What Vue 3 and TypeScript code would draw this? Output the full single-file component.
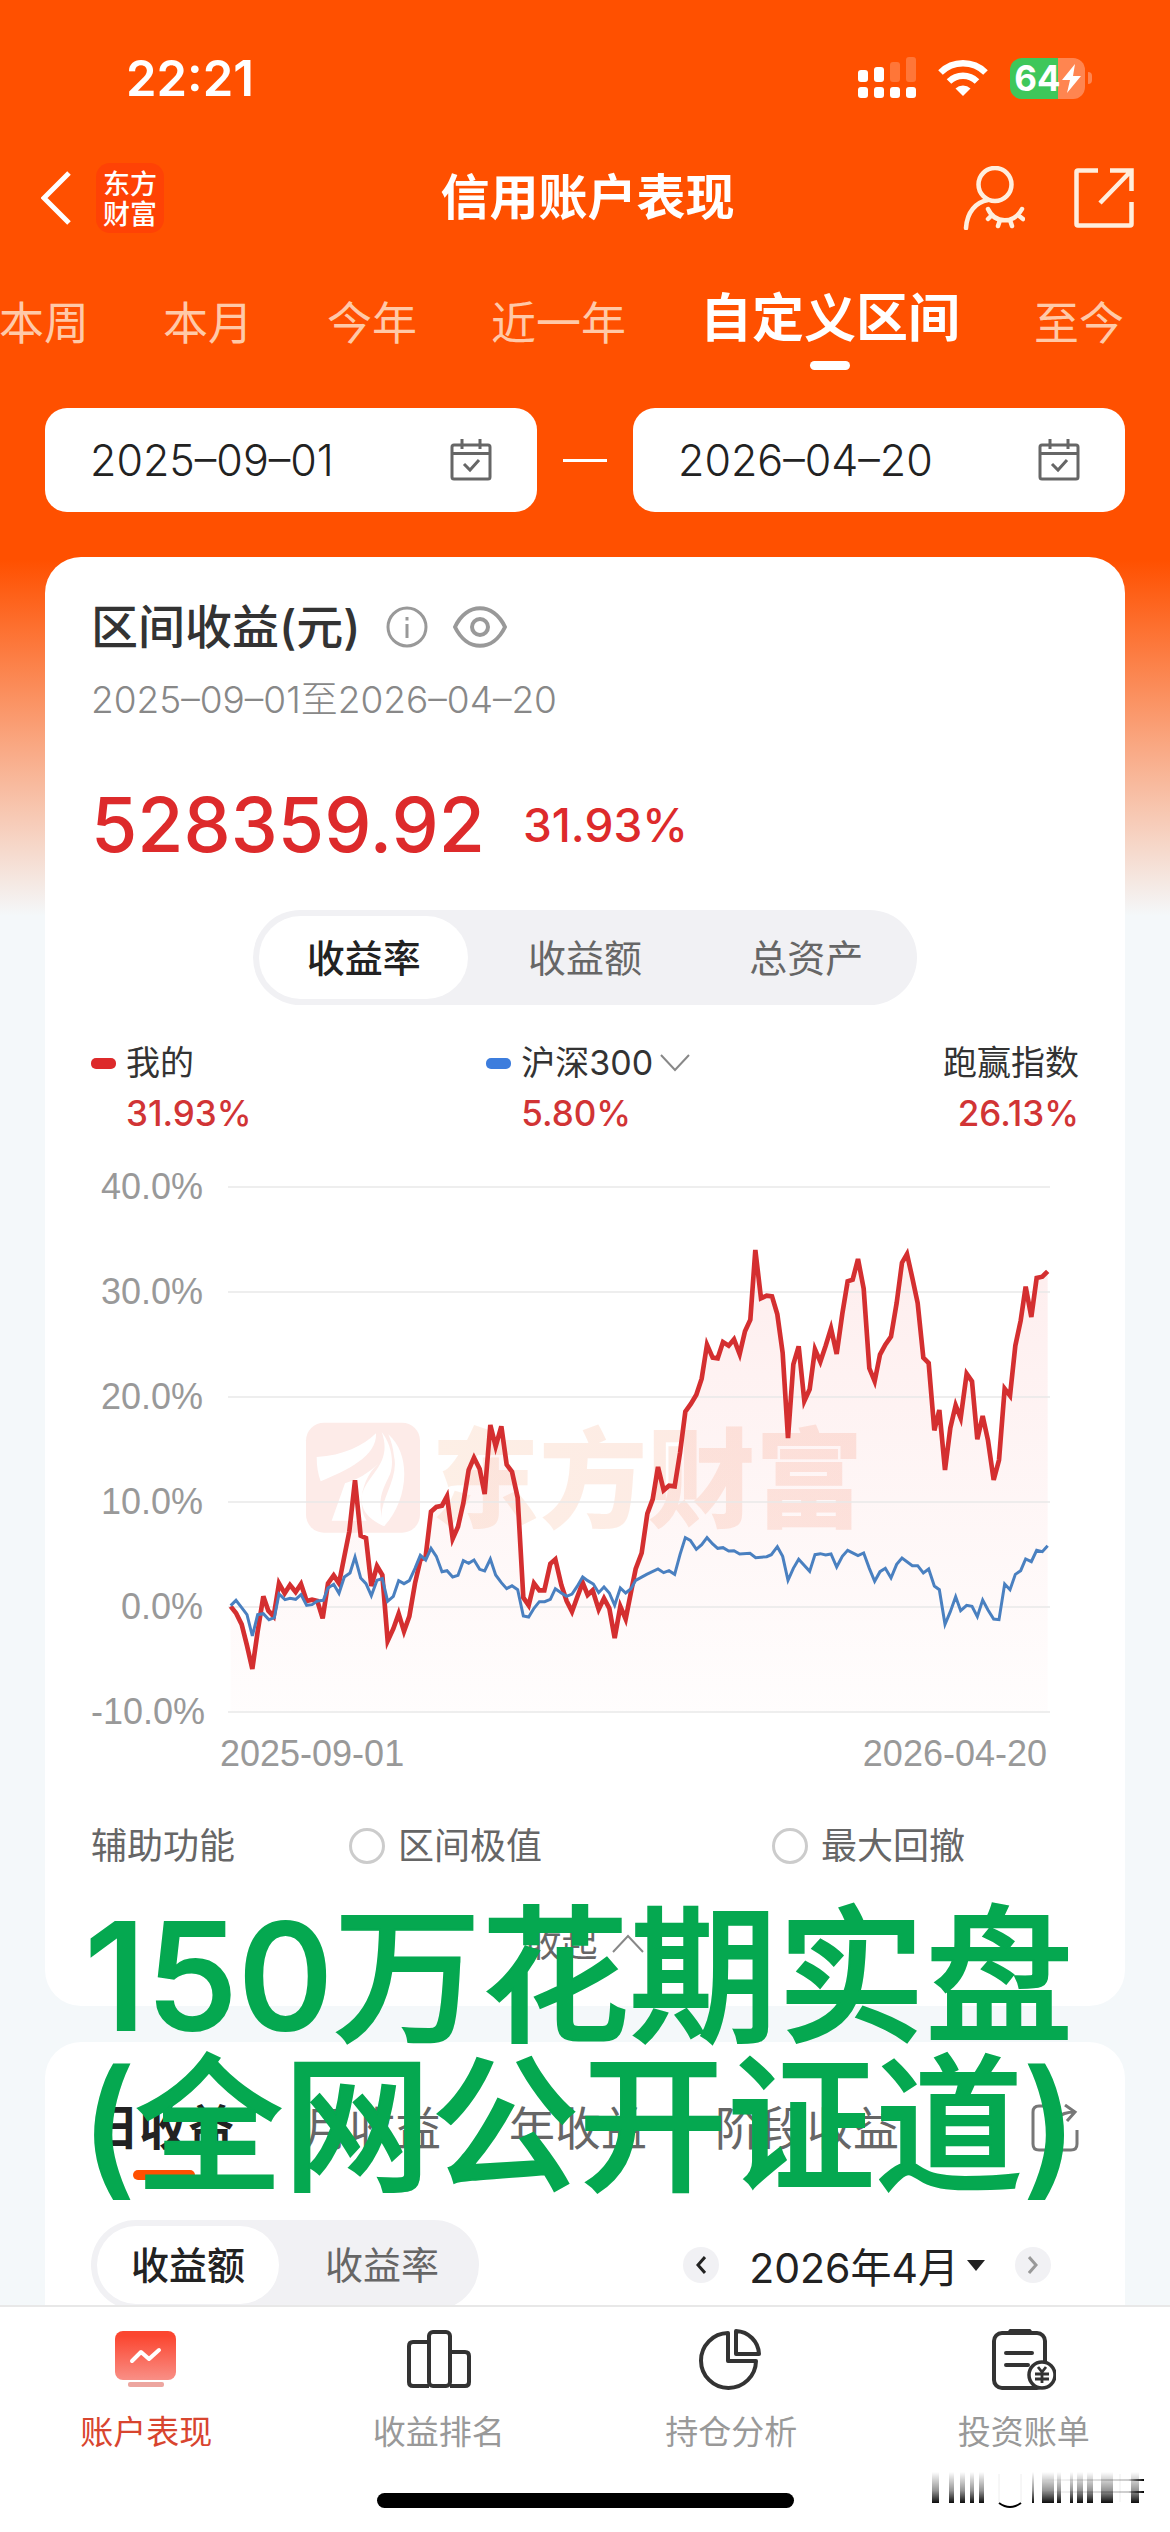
<script setup lang="ts">
import { ref } from 'vue'

const periods: string[] = ['本周', '本月', '今年', '近一年', '自定义区间', '至今']
const period = ref('自定义区间')
const startDate = ref('2025–09–01')
const endDate = ref('2026–04–20')

const metrics: string[] = ['收益率', '收益额', '总资产']
const metric = ref('收益率')

const axis: string[] = ['40.0%', '30.0%', '20.0%', '10.0%', '0.0%', '-10.0%']
const gridRows: number[] = [81, 396, 711, 1026, 1341, 1656]

// Samples use 294 units per 10%; the plot draws 315 units per 10%.
function toPlot(samples: string): string {
  return samples
    .split(' ')
    .map((pair) => {
      const [x, y] = pair.split(',').map(Number)
      return `${x},${Math.round((y * 315) / 294)}`
    })
    .join(' ')
}

const mine = toPlot(
  '92,1250 108,1268 125,1300 141,1360 157,1425 173,1320 190,1222 205,1262 221,1278 237,1185 254,1213 270,1190 287,1210 303,1187 320,1235 336,1231 352,1235 368,1283 384,1185 401,1163 417,1185 433,1110 448,1040 465,897 482,1052 498,1058 514,1193 531,1137 547,1162 563,1347 580,1312 596,1270 612,1320 628,1278 645,1185 661,1120 677,1110 693,985 709,972 726,968 741,942 758,1060 774,1027 790,960 806,868 822,833 839,865 854,935 871,742 887,802 904,746 920,853 936,873 953,945 970,1225 986,1247 1002,1185 1018,1205 1033,1205 1051,1130 1066,1118 1084,1190 1100,1235 1116,1265 1131,1225 1148,1183 1163,1218 1178,1205 1196,1258 1212,1227 1228,1255 1244,1338 1261,1250 1277,1285 1293,1210 1307,1145 1325,1100 1342,990 1358,950 1374,860 1391,925 1407,912 1424,914 1440,820 1456,705 1473,682 1489,657 1505,612 1521,517 1538,553 1553,555 1569,510 1586,520 1602,502 1619,543 1635,480 1651,447 1666,252 1683,387 1700,380 1716,382 1732,432 1748,540 1764,778 1780,572 1796,522 1813,675 1829,642 1845,530 1861,565 1877,520 1893,471 1910,543 1927,430 1943,340 1958,335 1974,277 1991,360 2008,583 2024,620 2040,545 2056,517 2073,495 2090,400 2106,287 2121,263 2137,330 2153,400 2170,553 2186,568 2203,757 2218,700 2235,868 2251,750 2267,687 2282,722 2300,598 2316,620 2332,782 2348,717 2364,785 2381,896 2397,840 2414,640 2430,660 2446,520 2462,450 2477,355 2494,440 2510,330 2527,327 2543,312'
)
const index300 = toPlot(
  '92,1248 108,1233 125,1253 141,1273 157,1333 173,1273 190,1270 207,1287 223,1281 237,1215 255,1231 270,1227 287,1230 303,1217 320,1247 336,1245 352,1235 370,1233 384,1198 401,1188 417,1213 433,1168 450,1156 465,1112 482,1170 498,1186 514,1220 531,1177 547,1172 563,1236 580,1222 596,1178 612,1186 628,1178 645,1143 661,1107 677,1120 693,1087 709,1110 726,1153 741,1150 758,1168 774,1163 790,1122 806,1129 822,1120 839,1146 854,1151 871,1117 887,1162 904,1183 920,1200 936,1192 953,1203 970,1277 986,1280 1002,1255 1018,1237 1034,1237 1051,1230 1066,1200 1084,1212 1100,1222 1116,1215 1131,1195 1148,1168 1163,1178 1180,1187 1196,1211 1212,1196 1228,1212 1244,1247 1261,1198 1277,1212 1293,1200 1307,1177 1340,1160 1374,1145 1391,1155 1407,1150 1424,1160 1440,1105 1456,1057 1471,1065 1489,1090 1505,1077 1521,1057 1538,1075 1553,1087 1569,1085 1586,1095 1602,1094 1619,1103 1650,1101 1667,1113 1700,1111 1714,1105 1732,1083 1748,1110 1764,1177 1780,1143 1796,1118 1829,1152 1845,1105 1861,1102 1877,1106 1893,1103 1910,1140 1927,1110 1943,1093 1974,1108 1991,1100 2008,1143 2024,1180 2040,1153 2056,1143 2073,1170 2090,1132 2106,1114 2137,1136 2153,1136 2170,1156 2186,1145 2203,1193 2218,1203 2235,1300 2251,1265 2267,1223 2282,1262 2300,1247 2316,1250 2332,1279 2348,1232 2364,1260 2381,1285 2397,1287 2414,1187 2430,1203 2446,1160 2462,1150 2477,1117 2494,1125 2510,1093 2527,1097 2543,1080'
)

const helpers: string[] = ['区间极值', '最大回撤']
const helper = ref('')

const incomeTabs: string[] = ['日收益', '月收益', '年收益', '阶段收益']
const incomeTab = ref('日收益')
const incomeKinds: string[] = ['收益额', '收益率']
const incomeKind = ref('收益额')
</script>

<template>
  <div class="page">
    <header class="top">
      <div class="status">
        <span class="clock">22:21</span>
        <div class="status-icons">
          <svg width="58" height="42" viewBox="0 0 58 42" fill="#fff">
            <rect x="0" y="13" width="10" height="12" rx="3" />
            <rect x="16" y="10" width="10" height="15" rx="3" />
            <rect x="32" y="5" width="10" height="20" rx="3" opacity=".22" />
            <rect x="48" y="0" width="10" height="25" rx="3" opacity=".22" />
            <rect x="0" y="30" width="10" height="11" rx="3" />
            <rect x="16" y="30" width="10" height="11" rx="3" />
            <rect x="32" y="30" width="10" height="11" rx="3" />
            <rect x="48" y="30" width="10" height="11" rx="3" />
          </svg>
          <svg width="50" height="38" viewBox="0 0 50 38" fill="none" stroke="#fff" stroke-width="6.500">
            <path d="M2.500 13.500A32 32 0 0 1 47.500 13.500" />
            <path d="M11 22.500A20 20 0 0 1 39 22.500" />
            <path d="M25 37L17.500 29.500A11 11 0 0 1 32.500 29.500Z" fill="#fff" stroke="none" />
          </svg>
          <div class="battery">
            <span class="cell">
              64<svg width="19" height="29" viewBox="0 0 19 29"><path d="M13 0L0 16H8L5 29L19 12H11Z" fill="#fff" /></svg>
            </span>
            <span class="cap"></span>
          </div>
        </div>
      </div>

      <div class="bar">
        <div class="side">
          <button class="plain" aria-label="返回">
            <svg width="30" height="54" viewBox="0 0 30 54" fill="none" stroke="#fff" stroke-width="5"><path d="M28 2L3 27L28 52" /></svg>
          </button>
          <span class="brand"><span>东方</span><span>财富</span></span>
        </div>
        <h1>信用账户表现</h1>
        <div class="side end">
          <button class="plain" aria-label="隐藏账户">
            <svg width="62" height="64" viewBox="0 0 62 64" fill="none" stroke="#ffeedd" stroke-width="4.500" stroke-linecap="round">
              <circle cx="32" cy="18.500" r="16.500" />
              <path d="M3 62C4 46 13 36 25 34M25 43C32 58 51 58 59 43M29 49L25 53M37 54L35 60M47 54L49 60M55 49L60 53" />
            </svg>
          </button>
          <button class="plain" aria-label="分享">
            <svg width="60" height="60" viewBox="0 0 60 60" fill="none" stroke="#ffeedd" stroke-width="4.500">
              <path d="M24 2.500H4Q2.500 2.500 2.500 4V56Q2.500 57.500 4 57.500H56Q57.500 57.500 57.500 56V34M36 2.500H57.500V23M57 3L26 35" />
            </svg>
          </button>
        </div>
      </div>

      <nav class="periods">
        <button v-for="p in periods" :key="p" :class="['period', { on: p === period }]" @click="period = p">{{ p }}</button>
      </nav>

      <div class="range">
        <label class="field">
          <input v-model="startDate" type="text" aria-label="开始日期" />
          <svg class="cal" viewBox="0 0 42 42"><path d="M4 6H38Q40 6 40 8V38Q40 40 38 40H4Q2 40 2 38V8Q2 6 4 6ZM2 14.500H40M12 0V10M30 0V10M14 25L20 31L29 21" /></svg>
        </label>
        <span class="dash"></span>
        <label class="field">
          <input v-model="endDate" type="text" aria-label="结束日期" />
          <svg class="cal" viewBox="0 0 42 42"><path d="M4 6H38Q40 6 40 8V38Q40 40 38 40H4Q2 40 2 38V8Q2 6 4 6ZM2 14.500H40M12 0V10M30 0V10M14 25L20 31L29 21" /></svg>
        </label>
      </div>
    </header>

    <main>
      <section class="card summary">
        <div class="heading">
          <h2>区间收益(元)</h2>
          <button class="plain" aria-label="说明">
            <svg width="42" height="42" viewBox="0 0 42 42" fill="none" stroke="#999" stroke-width="3"><circle cx="21" cy="21" r="19" /><path d="M21 18V32M21 11V14.500" /></svg>
          </button>
          <button class="plain" aria-label="显示金额">
            <svg width="54" height="42" viewBox="0 0 54 42" fill="none" stroke="#999" stroke-width="4"><path d="M2 21C14 -4 40 -4 52 21C40 46 14 46 2 21Z" stroke-linejoin="round" /><circle cx="27" cy="21" r="8" /></svg>
          </button>
        </div>
        <p class="span">2025–09–01至2026–04–20</p>
        <p class="total"><strong>528359.92</strong><span>31.93%</span></p>

        <div class="segment wide">
          <button v-for="m in metrics" :key="m" :class="{ on: m === metric }" @click="metric = m">{{ m }}</button>
        </div>

        <div class="legend">
          <div class="entry first">
            <i class="mark red"></i><span>我的</span>
            <b>31.93%</b>
          </div>
          <div class="entry">
            <i class="mark blue"></i>
            <button class="plain pick">沪深300<svg width="30" height="18" viewBox="0 0 30 18" fill="none" stroke="#888" stroke-width="2"><path d="M1 1L15 16L29 1" /></svg></button>
            <b>5.80%</b>
          </div>
          <div class="entry last">
            <span>跑赢指数</span>
            <b>26.13%</b>
          </div>
        </div>

        <div class="chart">
          <div class="axis"><span v-for="a in axis" :key="a">{{ a }}</span></div>
          <svg class="plot" viewBox="84 81 2466 1575" fill="none">
            <defs>
              <linearGradient id="area" x1="0" y1="270" x2="0" y2="1656" gradientUnits="userSpaceOnUse">
                <stop offset="0" stop-color="#f02a2a" stop-opacity=".08" />
                <stop offset="1" stop-color="#f02a2a" stop-opacity=".01" />
              </linearGradient>
              <linearGradient id="water" x1="0" y1="0" x2="1" y2="0">
                <stop offset="0" stop-color="#fdefe6" />
                <stop offset="1" stop-color="#fde8e2" />
              </linearGradient>
            </defs>
            <rect x="318" y="788" width="342" height="330" rx="54" fill="#fdebe8" />
            <path d="M350 891C430 887 490 857 528 820C532 889 440 932 362 964Q350 932 350 891Z" fill="#fff" />
            <path d="M545 816C580 911 500 943 485 1007C480 1061 520 1082 552 1099C530 1018 545 996 570 943C585 900 570 846 545 816Z" fill="#fff" />
            <path d="M565 823C640 889 620 1029 552 1099C520 1039 600 964 582 889Q578 852 565 823ZM435 970L395 1082H500C470 1039 485 954 535 911Q490 954 435 970Z" fill="#fff" />
            <text x="694" y="1076" class="water">东方财富</text>
            <path :d="`M92,1656 L${mine} L2543,1656 Z`" fill="url(#area)" />
            <path v-for="y in gridRows" :key="y" :d="`M84 ${y}H2550`" stroke="#e8e8e8" stroke-width="4" />
            <polyline :points="mine" stroke="#d42f30" stroke-width="14" />
            <polyline :points="index300" stroke="#4a80c0" stroke-width="9" />
          </svg>
          <div class="dates"><span>2025-09-01</span><span>2026-04-20</span></div>
        </div>

        <div class="helpers">
          <span>辅助功能</span>
          <label v-for="h in helpers" :key="h"><input v-model="helper" type="radio" name="helper" :value="h" />{{ h }}</label>
        </div>
        <button class="plain fold">收起<svg width="34" height="20" viewBox="0 0 34 20" fill="none" stroke="#888" stroke-width="2"><path d="M2 18L17 2L32 18" /></svg></button>
      </section>

      <section class="card income">
        <div class="income-tabs">
          <button v-for="t in incomeTabs" :key="t" :class="['plain', { on: t === incomeTab }]" @click="incomeTab = t">{{ t }}</button>
          <button class="plain share" aria-label="分享收益">
            <svg width="48" height="48" viewBox="0 0 48 48" fill="none" stroke="#777" stroke-width="3"><path d="M26 2H8Q2 2 2 8V40Q2 46 8 46H40Q46 46 46 40V26M20 32C20 16 28 8 44 8M34 1L44 8L36 17" /></svg>
          </button>
        </div>
        <div class="controls">
          <div class="segment">
            <button v-for="k in incomeKinds" :key="k" :class="{ on: k === incomeKind }" @click="incomeKind = k">{{ k }}</button>
          </div>
          <div class="month">
            <button class="round" aria-label="上个月"><svg width="10" height="18" viewBox="0 0 10 18" fill="none" stroke="#222" stroke-width="3"><path d="M9 1L2 9L9 17" /></svg></button>
            <button class="plain current">2026年4月<svg width="18" height="11" viewBox="0 0 18 11"><path d="M0 0H18L9 11Z" fill="#222" /></svg></button>
            <button class="round" aria-label="下个月"><svg width="10" height="18" viewBox="0 0 10 18" fill="none" stroke="#999" stroke-width="3"><path d="M1 1L8 9L1 17" /></svg></button>
          </div>
        </div>
      </section>
    </main>

    <p class="caption">150万花期实盘<br />(全网公开证道)</p>

    <footer class="dock">
      <nav class="tabs">
        <a href="#account" class="on">
          <svg width="64" height="64" viewBox="0 0 64 64">
            <defs><linearGradient id="tile" x1="0" y1="0" x2="0" y2="1"><stop offset=".1" stop-color="#fb4630" /><stop offset="1" stop-color="#f98f86" /></linearGradient></defs>
            <rect x="1" y="3" width="61" height="49" rx="8" fill="url(#tile)" /><rect x="14" y="54" width="36" height="5" rx="2" fill="#eda6a0" />
            <path d="M18 33L27 24L35 31L45 22" fill="none" stroke="#fff" stroke-width="4" stroke-linecap="round" stroke-linejoin="round" />
          </svg>
          账户表现
        </a>
        <a href="#rank">
          <svg width="64" height="64" viewBox="0 0 64 64" fill="none" stroke="#333" stroke-width="4">
            <rect x="22" y="4" width="21" height="54" rx="4" /><path d="M22 14H6Q2 14 2 18V54Q2 58 6 58H22M43 24H58Q62 24 62 28V54Q62 58 58 58H43" />
          </svg>
          收益排名
        </a>
        <a href="#holdings">
          <svg width="64" height="64" viewBox="0 0 64 64" fill="none" stroke="#333" stroke-width="4" stroke-linejoin="round">
            <path d="M29 5A27.500 27.500 0 1 0 57 33H29Z" /><path d="M37 3V26H60A24 24 0 0 0 37 3Z" />
          </svg>
          持仓分析
        </a>
        <a href="#bill">
          <svg width="64" height="64" viewBox="0 0 64 64" fill="none" stroke="#333" stroke-width="4">
            <rect x="2" y="5" width="51" height="55" rx="8" /><path d="M18 2H38L41 6H15Z" fill="#333" stroke-linejoin="round" stroke-width="2" />
            <path d="M14 25H40M14 37H36" stroke-linecap="round" /><circle cx="50" cy="47" r="13" fill="#fff" stroke-width="3.500" />
            <path d="M46 39L50 44L54 39M43 46H57M43 51H57M50 44V55" stroke-width="2.800" />
          </svg>
          投资账单
        </a>
      </nav>
      <div class="home">
        <span class="pill"></span>
        <svg class="trace" width="214" height="40" viewBox="0 0 214 40">
          <defs><linearGradient id="fade" x1="0" y1="0" x2="0" y2="31" gradientUnits="userSpaceOnUse"><stop offset="0" stop-color="#000" stop-opacity="0" /><stop offset=".6" stop-color="#000" stop-opacity=".42" /><stop offset="1" stop-color="#000" stop-opacity=".95" /></linearGradient>
            <linearGradient id="rule" x1="0" y1="0" x2="1" y2="0"><stop offset="0" stop-color="#000" stop-opacity="0" /><stop offset=".85" stop-color="#000" stop-opacity=".2" /><stop offset="1" stop-color="#000" /></linearGradient></defs>
          <path d="M2 0h7v31h-7zM19 0h5v31h-5zM30 0h5v31h-5zM40 0h4v31h-4zM49 0h5v31h-5zM102 0h2v31h-2zM112 0h12v31h-12zM127 0h4v31h-4zM140 0h3v31h-3zM147 0h6v31h-6zM157 0h6v31h-6zM171 0h12v31h-12zM201 0h8v31h-8z" fill="url(#fade)" />
          <path d="M69 31Q80 39 91 31" fill="none" stroke="#000" stroke-width="2" />
          <path d="M69 2V30M91 2V30M190 2V30" stroke="#eee" stroke-width="1" />
          <rect x="110" y="7" width="104" height="2" fill="url(#rule)" /><rect x="110" y="19" width="104" height="2" fill="url(#rule)" />
        </svg>
      </div>
    </footer>
  </div>
</template>

<style>
body {
  background: #f4f8fa;
}
</style>

<style scoped>
.page {
  position: relative;
  box-sizing: border-box;
  display: flex;
  flex-direction: column;
  min-height: 100vh;
  overflow: hidden;
  background: linear-gradient(#ff5000 560px, #f4f8fa 916px);
  font-family: Inter, 'Noto Sans CJK SC', sans-serif;
  color: #333;
}
h1, h2, p { margin: 0; font-weight: 500; }
button {
  border: 0;
  padding: 0;
  background: none;
  font: inherit;
  color: inherit;
  white-space: nowrap;
}
svg { display: block; flex: none; }
.plain { display: flex; align-items: center; }

.status {
  display: flex;
  align-items: center;
  justify-content: space-between;
  height: 156px;
  padding: 0 78px 0 126px;
  color: #fff;
}
.clock { font-size: 49px; font-weight: 600; }
.status-icons { display: flex; align-items: center; gap: 22px; }
.battery { display: flex; align-items: center; gap: 3px; }
.cell {
  display: flex;
  align-items: center;
  justify-content: center;
  gap: 1px;
  width: 75px;
  height: 41px;
  border-radius: 12px;
  background: linear-gradient(90deg, #3ec75a 64%, #ff8550 64%);
  font-size: 35px;
  font-weight: 700;
}
.cap { width: 4px; height: 12px; border-radius: 0 4px 4px 0; background: #ff8550; }

.bar {
  display: flex;
  align-items: center;
  height: 84px;
  padding: 0 36px 0 41px;
}
.side { flex: 1; display: flex; align-items: center; gap: 25px; }
.side.end { justify-content: flex-end; gap: 49px; }
.bar h1 { font-size: 49px; line-height: 60px; font-weight: 700; color: #fff; }
.brand {
  display: flex;
  flex-direction: column;
  align-items: center;
  justify-content: center;
  width: 68px;
  height: 70px;
  border-radius: 14px;
  background: #ff4205;
  font-size: 27px;
  line-height: 30px;
  font-weight: 500;
  font-family: 'Noto Sans CJK SC', sans-serif;
  color: #fff;
}

.periods {
  display: flex;
  align-items: flex-start;
  gap: 74px;
  height: 90px;
  margin: 40px 0 38px -1px;
}
.period { font-size: 45px; line-height: 88px; color: #ffc9a8; }
.period.on { font-size: 52px; line-height: 78px; font-weight: 700; color: #fff; }
.period.on::after {
  content: '';
  display: block;
  width: 40px;
  height: 9px;
  margin: 3px auto 0;
  border-radius: 5px;
  background: #fff;
}

.range { display: flex; align-items: center; gap: 26px; padding: 0 45px; }
.field {
  flex: 1;
  min-width: 0;
  box-sizing: border-box;
  display: flex;
  align-items: center;
  height: 104px;
  padding: 0 45px;
  border-radius: 22px;
  background: #fff;
}
.field input {
  flex: 1;
  min-width: 0;
  padding: 0;
  border: 0;
  outline: 0;
  background: none;
  font: inherit;
  font-size: 43px;
  font-weight: 300;
  color: #222;
}
.cal { width: 42px; height: 42px; fill: none; stroke: #666; stroke-width: 3; }
.dash { width: 44px; height: 3px; background: #fff; }

main { flex: 1; display: flex; flex-direction: column; gap: 36px; padding: 45px 45px 0; }
.card { border-radius: 36px; background: #fff; padding: 0 46px; }
.summary { padding-top: 40px; padding-bottom: 42px; }
.heading { display: flex; align-items: center; height: 60px; gap: 25px; }
.heading h2 { font-size: 47px; line-height: 60px; }
.span { margin-top: 21px; font-size: 37px; font-weight: 300; line-height: 44px; color: #888; }
.total {
  display: flex;
  align-items: center;
  gap: 38px;
  margin-top: 63px;
  line-height: 80px;
  color: #dd2a2b;
}
.total strong { font-size: 75px; font-weight: 500; }
.total span { font-size: 46px; }

.segment {
  box-sizing: border-box;
  display: flex;
  gap: 12px;
  height: 90px;
  padding: 6px;
  border-radius: 48px;
  background: #f1f1f4;
}
.segment button {
  flex: 1;
  border-radius: 42px;
  padding: 0 34px;
  font-size: 38px;
  line-height: 76px;
  color: #666;
}
.segment button.on { background: #fff; font-weight: 500; color: #222; }
.wide { width: 664px; height: 95px; margin: 45px auto 0; }

.legend {
  display: flex;
  margin-top: 38px;
  font-size: 34px;
  line-height: 40px;
}
.entry { display: grid; grid-template-columns: 25px auto; align-items: center; justify-content: start; gap: 10px; }
.entry.first { flex: 0 0 40%; }
.entry b { grid-column: 2; font-size: 35px; font-weight: 500; color: #d13435; }
.entry.last { grid-template-columns: auto; justify-items: end; margin-left: auto; }
.entry.last b { grid-column: 1; }
.mark { height: 11px; border-radius: 5px; }
.red { background: #dd2a2b; }
.blue { background: #3d7ddd; }
.pick { gap: 7px; }

.chart {
  display: grid;
  grid-template-columns: 112px 1fr;
  column-gap: 25px;
  align-items: center;
  margin-top: 36px;
  padding-right: 29px;
  font-family: 'Liberation Sans', sans-serif;
  font-size: 36px;
  line-height: 36px;
  color: #999;
}
.axis {
  align-self: stretch;
  display: flex;
  flex-direction: column;
  justify-content: space-between;
  text-align: right;
}
.plot { width: 100%; height: auto; margin: 18px 0; overflow: visible; }
.water { font: 900 324px 'Noto Sans CJK SC', sans-serif; fill: url(#water); }
.dates {
  grid-column: 1 / -1;
  display: flex;
  justify-content: space-between;
  margin-top: 4px;
  padding: 0 3px 0 129px;
  line-height: 40px;
}

.helpers {
  display: grid;
  grid-template-columns: 258px 423px auto;
  margin-top: 52px;
  font-size: 36px;
  line-height: 40px;
  color: #666;
}
.helpers label { display: flex; align-items: center; gap: 13px; }
.helpers input {
  appearance: none;
  box-sizing: border-box;
  width: 36px;
  height: 36px;
  margin: 0;
  border: 3px solid #ccc;
  border-radius: 50%;
}
.fold { gap: 13px; margin: 58px auto 0; font-size: 36px; line-height: 40px; color: #666; }

.income { flex: 1; padding-top: 56px; border-radius: 36px 36px 0 0; }
.income-tabs { display: flex; align-items: flex-start; gap: 68px; height: 82px; }
.income-tabs button { position: relative; font-size: 46px; line-height: 60px; color: #666; }
.income-tabs button.on { font-size: 48px; font-weight: 700; color: #222; }
.income-tabs button.on::after {
  content: '';
  position: absolute;
  top: 72px;
  left: 42px;
  width: 62px;
  height: 10px;
  border-radius: 5px;
  background: #ff5000;
}
.income-tabs .share { height: 60px; margin-left: auto; }
.controls {
  display: flex;
  align-items: center;
  justify-content: space-between;
  margin-top: 40px;
  padding-right: 28px;
}
.month { display: flex; align-items: center; gap: 30px; }
.round {
  display: flex;
  align-items: center;
  justify-content: center;
  width: 36px;
  height: 36px;
  border-radius: 50%;
  background: #f1f1f4;
}
.current { gap: 8px; font-size: 41px; color: #222; }

.caption {
  position: absolute;
  top: 1902px;
  left: 0;
  right: 12px;
  font-size: 148px;
  line-height: 149px;
  font-weight: 500;
  -webkit-text-stroke: 2px #05a850;
  text-align: center;
  white-space: nowrap;
  color: #05a850;
  pointer-events: none;
}

.dock {
  position: fixed;
  left: 0;
  right: 0;
  bottom: 0;
  border-top: 2px solid #e8e8e8;
  background: #fff;
}
.tabs { display: flex; padding-top: 21px; }
.tabs a {
  flex: 1;
  display: flex;
  flex-direction: column;
  align-items: center;
  gap: 16px;
  font-size: 33px;
  line-height: 48px;
  color: #999;
  text-decoration: none;
}
.tabs a.on { color: #d8452f; }
.home { position: relative; display: flex; justify-content: center; padding: 37px 0 24px; }
.pill { width: 417px; height: 15px; border-radius: 8px; background: #000; }
.trace { position: absolute; right: 26px; top: 16px; }
</style>
